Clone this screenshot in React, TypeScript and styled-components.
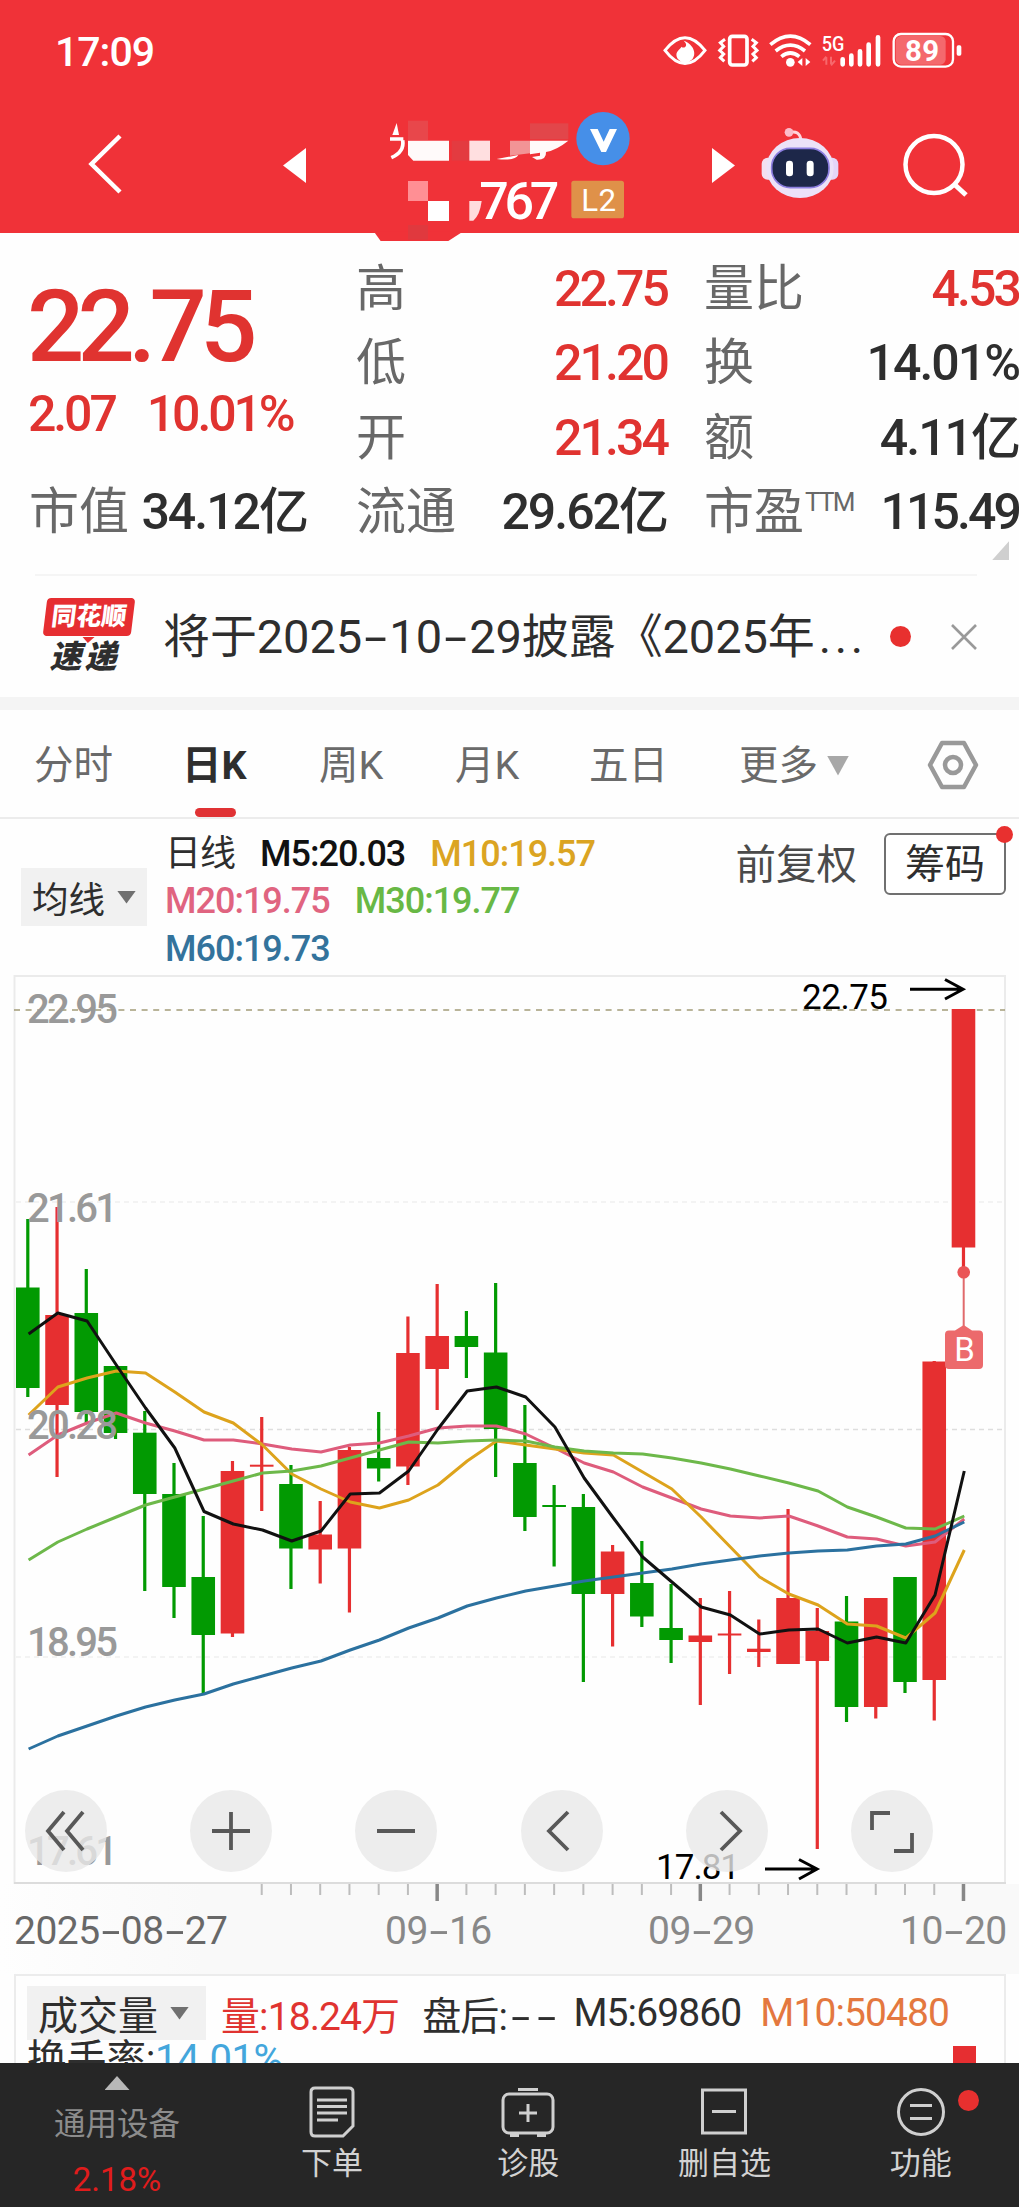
import React from "react";
import styled, { createGlobalStyle } from "styled-components";

const RED = "#e03330";
const INK = "#2e2e2e";
const FONT = 'Roboto, "Noto Sans CJK SC", sans-serif';

const GlobalStyle = createGlobalStyle`
  * { box-sizing: border-box; }
  body { margin: 0; background: #fff; font-family: ${FONT}; }
  svg { display: block; flex: none; }
  svg text { font-family: ${FONT}; }
`;

const Screen = styled.div`
  width: 1019px;
  height: 2207px;
  overflow: hidden;
  display: flex;
  flex-direction: column;
  background: #fefefe;
  color: ${INK};
  white-space: nowrap;
`;

/* ---------- header ---------- */

const Header = styled.header`
  position: relative;
  z-index: 1;
  flex: none;
  height: 233px;
  background: #f03238;
  color: #fff;
`;

const StatusBar = styled.div`
  height: 105px;
  padding: 0 56px 0 55px;
  display: flex;
  justify-content: space-between;
  align-items: flex-start;
`;

const Clock = styled.div`
  padding-top: 27px;
  font-size: 41px;
  font-weight: 500;
  line-height: 50px;
  letter-spacing: -1px;
`;

const StatusIcons = styled.svg`
  margin-top: 31px;
`;

const TitleBar = styled.div`
  height: 128px;
  display: flex;
  align-items: flex-start;
`;

const NavSlot = styled.div<{ $left: number; $top: number }>`
  flex: none;
  margin-left: ${(p) => p.$left}px;
  padding-top: ${(p) => p.$top}px;
`;

/* ---------- quote ---------- */

const Quote = styled.section`
  flex: none;
  height: 341px;
  padding: 19px 0 0 29px;
  display: grid;
  grid-template-columns: 278px 311px 1fr;
  grid-template-rows: repeat(4, 74.3px) 20px;
  column-gap: 49px;
`;

const PriceBlock = styled.div`
  grid-row: 1 / 4;
  color: ${RED};
  padding-top: 15px;
`;

const Price = styled.div`
  font-size: 101px;
  font-weight: 500;
  line-height: 120px;
  letter-spacing: -6.8px;
  margin-left: -2px;
`;

const Change = styled.div`
  display: flex;
  gap: 32px;
  margin-left: -1px;
  font-size: 50px;
  font-weight: 500;
  line-height: 54px;
  letter-spacing: -3.1px;
`;

const Stat = styled.div<{ $shift?: boolean }>`
  display: flex;
  justify-content: space-between;
  align-items: center;
  margin-left: ${(p) => (p.$shift ? -12 : 0)}px;
  line-height: 74px;
`;

const StatLabel = styled.span`
  font-size: 50px;
  color: #686868;
`;

const Sup = styled.sup`
  font-size: 26px;
  line-height: 0;
  letter-spacing: -1.8px;
  vertical-align: 18px;
  margin-left: 1px;
`;

const StatValue = styled.span<{ $up?: boolean; $tight?: boolean }>`
  font-size: 50px;
  font-weight: 500;
  letter-spacing: ${(p) => (p.$tight ? -2.9 : -2)}px;
  color: ${(p) => (p.$up ? RED : INK)};
`;

const Corner = styled.div`
  grid-column: 3;
  justify-self: end;
  align-self: end;
  width: 17px;
  height: 19px;
  margin: 0 10px 9px 0;
  background: #cfcfcf;
  clip-path: polygon(100% 0, 100% 100%, 0 100%);
`;

/* ---------- notice ---------- */

const Notice = styled.section`
  flex: none;
  height: 123px;
  margin: 0 42px 0 35px;
  border-top: 2px solid #f5f5f5;
  display: flex;
  align-items: center;
`;

const Brand = styled.div`
  width: 93px;
  height: 80px;
  margin: 2px 28px 0 7px;
  display: flex;
  flex-direction: column;
  align-items: center;
  font-weight: 900;
  font-style: italic;
`;

const BrandTop = styled.div`
  position: relative;
  width: 88px;
  height: 40px;
  border-radius: 4px;
  transform: skewX(-7deg);
  background: #e62e31;
  color: #fff;
  font-size: 25px;
  line-height: 38px;
  text-align: center;
  font-style: normal;
  &::after {
    content: "";
    position: absolute;
    left: 40px;
    top: 39px;
    border: 6px solid transparent;
    border-top-color: #e62e31;
    border-bottom: 0;
  }
`;

const BrandBottom = styled.div`
  font-size: 32px;
  line-height: 42px;
  letter-spacing: 3px;
  margin-left: -8px;
`;

const NoticeText = styled.div`
  width: 705px;
  font-size: 47px;
  line-height: 60px;
  letter-spacing: -0.1px;
`;

const Ellipsis = styled.span`
  margin-left: 4px;
  letter-spacing: 3.6px;
`;

const DashGlyph = styled.span<{ $w: number }>`
  display: inline-block;
  width: ${(p) => p.$w}em;
  text-align: center;
  transform: scaleX(1.75);
`;

const Dot = styled.span<{ $size: number }>`
  flex: none;
  width: ${(p) => p.$size}px;
  height: ${(p) => p.$size}px;
  border-radius: 50%;
  background: #e8302f;
`;

const NoticeDot = styled(Dot)`
  margin-left: 22px;
`;

const NoticeClose = styled.svg`
  margin-left: auto;
`;

const Divider = styled.div`
  flex: none;
  height: 13px;
  background: #f4f4f4;
`;

/* ---------- tabs ---------- */

const Tabs = styled.nav`
  flex: none;
  height: 109px;
  padding: 0 40px 0 34px;
  border-bottom: 2px solid #ececec;
  display: flex;
  align-items: stretch;
`;

const Tab = styled.div<{ $active?: boolean; $w: number }>`
  width: ${(p) => p.$w}px;
  flex: none;
  display: flex;
  flex-direction: column;
  align-items: flex-start;
  font-size: 39.5px;
  line-height: 111px;
  color: ${(p) => (p.$active ? INK : "#6a6a6a")};
  font-weight: ${(p) => (p.$active ? 700 : 400)};
`;

const TabMark = styled.span`
  width: 41px;
  height: 11px;
  margin: -13px 0 0 13px;
  border-radius: 6px;
  background: #e03234;
`;

const TabLabel = styled.span`
  display: flex;
  align-items: center;
  gap: 9px;
`;

const Caret = styled.span<{ $w: number; $h: number; $c: string; $up?: boolean }>`
  flex: none;
  width: ${(p) => p.$w}px;
  height: ${(p) => p.$h}px;
  background: ${(p) => p.$c};
  clip-path: ${(p) =>
    p.$up ? "polygon(50% 0, 100% 100%, 0 100%)" : "polygon(0 0, 100% 0, 50% 100%)"};
`;

const TabSettings = styled.svg`
  margin: 30px 0 0 auto;
`;

/* ---------- indicator legend ---------- */

const Legend = styled.section`
  flex: none;
  height: 156px;
  padding: 12px 13px 0 21px;
  display: flex;
  align-items: flex-start;
`;

const Picker = styled.button<{ $w: number; $h: number; $size: number }>`
  flex: none;
  width: ${(p) => p.$w}px;
  height: ${(p) => p.$h}px;
  padding: 0 0 0 11px;
  border: 0;
  background: #f1f1f1;
  display: flex;
  align-items: center;
  gap: 12px;
  font-family: inherit;
  font-size: ${(p) => p.$size}px;
  color: ${INK};
`;

const PickerSlot = styled.div`
  padding: 37px 18px 0 0;
`;

const Averages = styled.div`
  width: 480px;
  display: flex;
  flex-wrap: wrap;
  column-gap: 25px;
  font-size: 36px;
  line-height: 47.4px;
  letter-spacing: -1px;
`;

const Average = styled.span<{ $c: string; $regular?: boolean }>`
  color: ${(p) => p.$c};
  font-weight: ${(p) => (p.$regular ? 400 : 500)};
`;

const Adjust = styled.div`
  margin: 11px 0 0 auto;
  font-size: 40.5px;
  line-height: 46px;
  color: #4a4a4a;
`;

const Chips = styled.button`
  position: relative;
  width: 122px;
  height: 62px;
  margin: 2px 0 0 27px;
  padding: 0;
  border: 2px solid #707070;
  border-radius: 6px;
  background: #fff;
  font: 40px/60px ${FONT};
  color: ${INK};
`;

const ChipsDot = styled(Dot)`
  position: absolute;
  right: -9px;
  top: -9px;
`;

/* ---------- chart ---------- */

const ChartArea = styled.section`
  position: relative;
  flex: none;
  height: 909px;
`;

const Controls = styled.div`
  position: absolute;
  left: 25px;
  top: 815px;
  width: 908px;
  display: flex;
  justify-content: space-between;
`;

const Control = styled.button`
  width: 82px;
  height: 82px;
  padding: 0;
  border: 0;
  border-radius: 50%;
  background: rgba(233, 233, 233, 0.8);
`;

const TimeAxis = styled.section`
  flex: none;
  height: 90px;
  background: linear-gradient(90deg, #fefefe, #f9f9f9 20%);
`;

const Dates = styled.div`
  display: grid;
  grid-template-columns: 371px 263px 252px auto;
  padding: 3px 0 0 14px;
  font-size: 39px;
  line-height: 50px;
  letter-spacing: -0.5px;
`;

const DateLabel = styled.span<{ $strong?: boolean }>`
  color: ${(p) => (p.$strong ? "#686868" : "#888")};
`;

/* ---------- volume ---------- */

const Volume = styled.section`
  flex: none;
  height: 89px;
  margin: 0 13px 0 14px;
  border: 2px solid #ececec;
  border-bottom: 0;
  overflow: hidden;
`;

const VolumeRow = styled.div`
  display: flex;
  align-items: center;
  padding: 10px 0 0 11px;
  height: 64px;
  font-size: 39px;
`;

const VolumeItem = styled.span<{ $c: string; $left: number }>`
  color: ${(p) => p.$c};
  margin-left: ${(p) => p.$left}px;
  letter-spacing: -0.9px;
`;

const TurnoverRow = styled.div`
  display: flex;
  justify-content: space-between;
  padding: 0 28px 0 11px;
  font-size: 40px;
  line-height: 40px;
  letter-spacing: -0.4px;
`;

const Turnover = styled.span`
  color: #43a6dc;
`;

const VolumeBar = styled.span`
  width: 23px;
  height: 60px;
  margin-top: 6px;
  background: #e62e31;
`;

/* ---------- bottom navigation ---------- */

const BottomNav = styled.nav`
  flex: none;
  height: 144px;
  background: #262626;
  display: grid;
  grid-template-columns: 234px repeat(4, 196.2px);
`;

const Device = styled.div`
  display: flex;
  flex-direction: column;
  align-items: center;
  padding-top: 13px;
  color: #8c8c8c;
  font-size: 31.5px;
  line-height: 44px;
`;

const DeviceName = styled.span`
  margin-top: 13px;
`;

const DeviceRate = styled.span`
  margin-top: 11px;
  font-size: 33px;
  color: #e01c1c;
`;

const NavItem = styled.div`
  position: relative;
  display: flex;
  flex-direction: column;
  align-items: center;
  padding-top: 22px;
  color: #d2d2d2;
  font-size: 31px;
  line-height: 44px;
`;

const NavIcon = styled.svg`
  margin-bottom: 3px;
`;

const NavDot = styled(Dot)`
  position: absolute;
  left: 135px;
  top: 27px;
`;

function Dash({ w = 0.55 }: { w?: number }) {
  return <DashGlyph $w={w}>-</DashGlyph>;
}

function Dashed({ text, w }: { text: string; w?: number }) {
  return (
    <>
      {text.split("-").map((part, i) => (
        <React.Fragment key={i}>
          {i > 0 && <Dash w={w} />}
          {part}
        </React.Fragment>
      ))}
    </>
  );
}

/* ---------- chart data: vertical positions on the price canvas ---------- */

type Candle = ["u" | "d", number, number, number, number];

// direction, high, body top, body bottom, low
const candles: Candle[] = [
  ["d", 1219, 1287.5, 1388, 1397],
  ["u", 1207, 1315, 1405, 1477],
  ["d", 1269, 1313, 1412, 1423],
  ["d", 1366, 1366, 1433, 1439],
  ["d", 1411, 1432.7, 1494, 1591],
  ["d", 1463, 1494, 1587, 1618],
  ["d", 1516, 1577, 1635, 1693],
  ["u", 1461, 1471, 1633.5, 1637],
  ["u", 1417, 1464.7, 1466.7, 1511],
  ["d", 1465, 1484, 1548.5, 1589],
  ["u", 1501, 1534.5, 1549.5, 1583.5],
  ["u", 1447, 1450, 1548.5, 1612.5],
  ["d", 1412, 1458, 1468.5, 1481.5],
  ["u", 1316.5, 1353, 1466.5, 1485],
  ["u", 1284, 1336, 1369, 1410],
  ["d", 1311, 1336, 1347, 1378],
  ["d", 1283, 1352.5, 1429, 1477],
  ["d", 1405, 1463, 1517, 1531],
  ["d", 1485, 1505, 1507, 1566.5],
  ["d", 1494, 1507, 1594, 1682],
  ["u", 1545, 1551.5, 1594, 1646.5],
  ["d", 1541, 1583, 1616.5, 1627],
  ["d", 1584, 1628, 1640, 1663],
  ["u", 1598, 1635.5, 1642, 1705],
  ["u", 1591, 1633.5, 1635.5, 1674],
  ["u", 1619.5, 1648.7, 1652, 1667],
  ["u", 1509, 1598, 1664, 1664],
  ["u", 1608, 1631, 1661, 1849],
  ["d", 1596, 1621.5, 1707, 1722],
  ["u", 1598, 1598, 1707, 1718.5],
  ["d", 1577, 1577, 1682, 1693],
  ["u", 1361, 1361.5, 1680, 1720.5],
  ["u", 1009, 1009, 1247.5, 1272],
];

const averages: { color: string; ys: number[] }[] = [
  {
    color: "#de5c7c",
    ys: [1455, 1435, 1423, 1413, 1423, 1431, 1440, 1440, 1444, 1449, 1452, 1445, 1443, 1436, 1428, 1426, 1426, 1434, 1448, 1463, 1472, 1487, 1498, 1509, 1516, 1518, 1516, 1526, 1537, 1539, 1546, 1542, 1519],
  },
  {
    color: "#dda31c",
    ys: [1415, 1387, 1378, 1371, 1373, 1392, 1412, 1423, 1445, 1474, 1489, 1502, 1508, 1500, 1485, 1461, 1441, 1445, 1449, 1453, 1455, 1472, 1489, 1517, 1547, 1577, 1594, 1605, 1624, 1626, 1638, 1613, 1550],
  },
  {
    color: "#6db84a",
    ys: [1560, 1542, 1529, 1517, 1505, 1497, 1489, 1481, 1473, 1471, 1466, 1458, 1450, 1442, 1443, 1441, 1440, 1441, 1447, 1451, 1453, 1454, 1458, 1463, 1469, 1476, 1483, 1491, 1507, 1517, 1528, 1529, 1516],
  },
  {
    color: "#2b719f",
    ys: [1749, 1736, 1726, 1716, 1707, 1700, 1694, 1684, 1676, 1668, 1661, 1650, 1640, 1628, 1618, 1606, 1598, 1591, 1586, 1581, 1577, 1573, 1569, 1564, 1560, 1556, 1553, 1551, 1550, 1546, 1544, 1536, 1522],
  },
  {
    color: "#111",
    ys: [1334, 1313, 1321, 1365, 1408, 1448, 1511.5, 1524, 1530, 1541, 1531, 1494, 1493, 1471, 1429, 1391, 1387, 1397, 1427, 1478, 1518, 1557, 1582, 1607, 1615, 1634, 1630, 1629, 1643, 1637, 1643, 1595, 1471],
  },
];

const priceLabels: [string, number][] = [
  ["22.95", 1022.5],
  ["21.61", 1221.5],
  ["20.28", 1439],
  ["18.95", 1656],
  ["17.61", 1865],
];

const centre = (i: number) => 27.8 + i * 29.24;

function PriceChart() {
  return (
    <svg width="1019" height="909" viewBox="0 975 1019 909">
      <path d="M14.5 1884V976H1005V1884" fill="none" stroke="#ebebeb" strokeWidth="2" />
      <path d="M14 1883H1006" stroke="#dcdcdc" strokeWidth="2" />
      <path d="M14 1010H1005" stroke="#a29c78" strokeWidth="1.6" strokeDasharray="6 5.6" />
      <path d="M16 1202H1005M16 1657H1005" stroke="#efefef" strokeWidth="1.4" strokeDasharray="5 4" />
      <path d="M16 1429.5H1005" stroke="#dedede" strokeWidth="1.4" strokeDasharray="5 4" />
      {candles.map(([dir, high, top, bottom, low], i) => {
        const fill = dir === "u" ? "#e62f30" : "#029a02";
        return (
          <g key={i} fill={fill}>
            <rect x={centre(i) - 1.6} y={high} width="3.2" height={low - high} />
            <rect x={centre(i) - 11.8} y={top} width="23.6" height={bottom - top} />
          </g>
        );
      })}
      {averages.map(({ color, ys }) => (
        <polyline
          key={color}
          fill="none"
          stroke={color}
          strokeWidth="3"
          strokeLinejoin="round"
          points={ys.map((y, i) => `${centre(i) + 0.8},${y}`).join(" ")}
        />
      ))}
      {priceLabels.map(([label, y]) => (
        <text key={label} x="27" y={y} fontSize="40" fontWeight="500" fill="#999" textLength="91">
          {label}
        </text>
      ))}
      <g stroke="#000" strokeWidth="3" fill="none">
        <path d="M910 989.3H963M945 979.5L963 989.3L945 999" />
        <path d="M765 1869H817M799 1859.5L817 1869L799 1879" />
      </g>
      <text x="802" y="1009" fontSize="35" textLength="86">22.75</text>
      <text x="656" y="1879" fontSize="35" textLength="84">17.81</text>
      <path d="M963.7 1272V1328" stroke="#e06a6c" strokeWidth="2" />
      <circle cx="963.7" cy="1272.3" r="6.3" fill="#ea5557" />
      <path d="M949 1330.500H955L963.700 1325L972 1330.500H979Q983 1330.500 983 1334.500V1365Q983 1369 979 1369H949Q945 1369 945 1365V1334.500Q945 1330.500 949 1330.500Z" fill="#ec6a6c" />
      <text x="964.500" y="1361" fontSize="33" textAnchor="middle" fill="#fff">B</text>
    </svg>
  );
}

const controlPaths = [
  "M39 22L23 41L39 60M58 22L42 41L58 60",
  "M22 41H60M41 22V60",
  "M22 41H60",
  "M47 22L28 41L47 60",
  "M35 22L54 41L35 60",
  "M39 23H21V40M43 61H61V43",
];

function StatusGlyphs() {
  return (
    <StatusIcons width="300" height="40" viewBox="38 33 900 120">
      <g fill="none" stroke="#fff" strokeWidth="9">
        <path d="M44 91Q104 15 164 91Q104 170 44 91Z" />
        <rect x="238" y="49" width="52" height="86" rx="8" strokeWidth="11" />
        <path d="M224 58L210 68L220 79L208 91L220 102L210 113L222 124M304 58L318 68L308 79L320 91L308 102L318 113L306 124" strokeWidth="9" />
        <path d="M360 74Q420 23 480 74M376 93Q420 58 464 93M393 110Q420 88 447 110" strokeWidth="11" />
        <rect x="730" y="42" width="178" height="98" rx="22" strokeWidth="7" />
      </g>
      <path d="M100 62C118 78 98 88 94 80C84 92 72 98 82 116Q104 140 126 118C142 96 124 70 100 62Z" fill="#fff" />
      <circle cx="420" cy="127" r="13" fill="#fff" />
      <path d="M456 114V138L442 126ZM466 114V138L480 126Z" fill="#fff" />
      <path d="M528 112V134M518 122L528 110M542 110V132M554 122L542 136" stroke="#f7686c" strokeWidth="6" fill="none" />
      <path d="M577 118V133M603 107V133M629 94V133M655 74V133M683 52V133" stroke="#fff" strokeWidth="14" strokeLinecap="round" />
      <rect x="736" y="48" width="150" height="86" rx="16" fill="#f4696d" />
      <rect x="919" y="76" width="14" height="31" rx="5" fill="#fff" />
      <text x="514" y="92" fontSize="62" fontWeight="500" fill="#fff" textLength="68" lengthAdjust="spacingAndGlyphs">5G</text>
      <text x="764" y="123" fontSize="88" fontWeight="700" fill="#fff" textLength="102">89</text>
    </StatusIcons>
  );
}

function StockTitle() {
  return (
    <svg width="300" height="145" viewBox="0 0 900 435">
      <path d="M42 380H308L265 408H62Z" fill="#f03238" />
      <rect x="144" y="47" width="60" height="58" fill="#e8474b" />
      <rect x="510" y="55" width="115" height="48" fill="#e2464a" />
      <rect x="275" y="107" width="52" height="60" fill="#e33b40" />
      <rect x="144" y="360" width="60" height="44" fill="#e0393e" />
      <path d="M110 54L97 90H117Z" fill="#fff" />
      <path d="M90 102H130M128 106Q134 140 94 158" fill="none" stroke="#fff" strokeWidth="11" />
      <path d="M144 107H267V167H160L144 150Z" fill="#fffafa" />
      <rect x="328" y="107" width="62" height="60" fill="#ffdfe0" />
      <path d="M450 107H510V145L450 152Z" fill="#f29496" />
      <path d="M510 107H625Q590 135 558 141Q560 165 530 164L516 156L540 152V143L510 148Z" fill="#fffafa" />
      <path d="M410 162L475 150Q465 168 410 162Z" fill="#fff" />
      <rect x="144" y="228" width="60" height="60" fill="#ff8f94" />
      <rect x="204" y="288" width="63" height="60" fill="#fff" />
      <path d="M328 288H365Q360 330 340 347H328Z" fill="#ffdcdd" />
      <circle cx="729" cy="101" r="80" fill="#468fe8" />
      <path d="M690 72H713L731 110L749 72H771L738 141H724Z" fill="#fff" />
      <rect x="634" y="227" width="158" height="113" rx="8" fill="#df9149" />
      <text x="358" y="342" fontSize="156" fontWeight="500" fill="#fff" textLength="240">767</text>
      <text x="664" y="317" fontSize="94" fill="#fff" textLength="104">L2</text>
    </svg>
  );
}

function Robot() {
  return (
    <svg width="78" height="72" viewBox="332 320 234 216">
      <path d="M416 337Q448 328 452 360" fill="none" stroke="#ffd5dc" strokeWidth="9" />
      <circle cx="416" cy="336" r="13" fill="#fcbcca" />
      <rect x="334" y="412" width="40" height="66" rx="18" fill="#f3dff0" />
      <rect x="524" y="412" width="40" height="66" rx="18" fill="#e4d6f8" />
      <ellipse cx="449" cy="443" rx="101" ry="90" fill="#ece2f8" />
      <rect x="364" y="384" width="172" height="118" rx="56" fill="#1d2749" stroke="#8c7ee0" strokeWidth="5" />
      <rect x="407" y="421" width="21" height="47" rx="10" fill="#fff" />
      <rect x="469" y="421" width="21" height="47" rx="10" fill="#fff" />
    </svg>
  );
}

export default function App() {
  return (
    <>
      <GlobalStyle />
      <Screen>
        <Header>
          <StatusBar>
            <Clock>17:09</Clock>
            <StatusGlyphs />
          </StatusBar>
          <TitleBar>
            <NavSlot $left={87} $top={28}>
              <svg width="37" height="62" viewBox="0 0 37 62">
                <path d="M33 3L4.500 31L33 59" fill="none" stroke="#fff" strokeWidth="4.500" />
              </svg>
            </NavSlot>
            <NavSlot $left={159} $top={43}>
              <svg width="24" height="35" viewBox="0 0 24 35">
                <path d="M23 0V35L0 17.500Z" fill="#fff" />
              </svg>
            </NavSlot>
            <NavSlot $left={53} $top={0}>
              <StockTitle />
            </NavSlot>
            <NavSlot $left={52} $top={43}>
              <svg width="24" height="35" viewBox="0 0 24 35">
                <path d="M0 0V35L23 17.500Z" fill="#fff" />
              </svg>
            </NavSlot>
            <NavSlot $left={25} $top={22}>
              <Robot />
            </NavSlot>
            <NavSlot $left={63} $top={27}>
              <svg width="68" height="68" viewBox="0 0 68 68">
                <circle cx="32" cy="32.500" r="28.500" fill="none" stroke="#fff" strokeWidth="4.500" />
                <path d="M52 52L64 63" stroke="#fff" strokeWidth="5" />
              </svg>
            </NavSlot>
          </TitleBar>
        </Header>

        <Quote>
          <PriceBlock>
            <Price>22.75</Price>
            <Change>
              <span>2.07</span>
              <span>10.01%</span>
            </Change>
          </PriceBlock>
          <Stat><StatLabel>高</StatLabel><StatValue $up $tight>22.75</StatValue></Stat>
          <Stat $shift><StatLabel>量比</StatLabel><StatValue $up $tight>4.53</StatValue></Stat>
          <Stat><StatLabel>低</StatLabel><StatValue $up $tight>21.20</StatValue></Stat>
          <Stat $shift><StatLabel>换</StatLabel><StatValue>14.01%</StatValue></Stat>
          <Stat><StatLabel>开</StatLabel><StatValue $up $tight>21.34</StatValue></Stat>
          <Stat $shift><StatLabel>额</StatLabel><StatValue>4.11亿</StatValue></Stat>
          <Stat><StatLabel>市值</StatLabel><StatValue>34.12亿</StatValue></Stat>
          <Stat><StatLabel>流通</StatLabel><StatValue>29.62亿</StatValue></Stat>
          <Stat $shift>
            <StatLabel>市盈<Sup>TTM</Sup></StatLabel>
            <StatValue $tight>115.49</StatValue>
          </Stat>
          <Corner />
        </Quote>

        <Notice>
          <Brand>
            <BrandTop>同花顺</BrandTop>
            <BrandBottom>速递</BrandBottom>
          </Brand>
          <NoticeText>
            <Dashed text="将于2025-10-29披露《2025年" w={0.58} />
            <Ellipsis>...</Ellipsis>
          </NoticeText>
          <NoticeDot $size={21} />
          <NoticeClose width="26" height="26" viewBox="0 0 26 26">
            <path d="M1 1L25 25M25 1L1 25" stroke="#999" strokeWidth="2.600" />
          </NoticeClose>
        </Notice>
        <Divider />

        <Tabs>
          <Tab $w={148}>分时</Tab>
          <Tab $w={137} $active>
            日K
            <TabMark />
          </Tab>
          <Tab $w={136}>周K</Tab>
          <Tab $w={134}>月K</Tab>
          <Tab $w={150}>五日</Tab>
          <Tab $w={110}>
            <TabLabel>
              更多
              <Caret $w={22} $h={20} $c="#a8a8a8" />
            </TabLabel>
          </Tab>
          <TabSettings width="52" height="50" viewBox="0 0 52 50">
            <path d="M15 3H37L49 25L37 47H15L3 25Z" fill="none" stroke="#999" strokeWidth="4.500" strokeLinejoin="round" />
            <circle cx="26" cy="25" r="8" fill="none" stroke="#999" strokeWidth="4.500" />
          </TabSettings>
        </Tabs>

        <Legend>
          <PickerSlot>
            <Picker $w={126} $h={58} $size={36.5}>
              均线
              <Caret $w={19} $h={13} $c="#707070" />
            </Picker>
          </PickerSlot>
          <Averages>
            <Average $c={INK} $regular>日线</Average>
            <Average $c="#111">M5:20.03</Average>
            <Average $c="#dba422">M10:19.57</Average>
            <Average $c="#e06480">M20:19.75</Average>
            <Average $c="#68b845">M30:19.77</Average>
            <Average $c="#33739c">M60:19.73</Average>
          </Averages>
          <Adjust>前复权</Adjust>
          <Chips>
            筹码
            <ChipsDot $size={17} />
          </Chips>
        </Legend>

        <ChartArea>
          <PriceChart />
          <Controls>
            {controlPaths.map((d) => (
              <Control key={d}>
                <svg width="82" height="82" viewBox="0 0 82 82">
                  <path d={d} fill="none" stroke="#585858" strokeWidth="3.800" />
                </svg>
              </Control>
            ))}
          </Controls>
        </ChartArea>

        <TimeAxis>
          <svg width="1019" height="19" viewBox="0 0 1019 19">
            {Array.from({ length: 25 }, (_, k) => k + 8).map((i) => {
              const major = i % 9 === 5;
              return (
                <path
                  key={i}
                  d={`M${centre(i)} 0V${major ? 17 : 11}`}
                  stroke={major ? "#888" : "#bdbdbd"}
                  strokeWidth={major ? 3.5 : 2}
                />
              );
            })}
          </svg>
          <Dates>
            <DateLabel $strong><Dashed text="2025-08-27" w={0.54} /></DateLabel>
            <DateLabel><Dashed text="09-16" w={0.54} /></DateLabel>
            <DateLabel><Dashed text="09-29" w={0.54} /></DateLabel>
            <DateLabel><Dashed text="10-20" w={0.54} /></DateLabel>
          </Dates>
        </TimeAxis>

        <Volume>
          <VolumeRow>
            <Picker $w={179} $h={54} $size={40}>
              成交量
              <Caret $w={19} $h={13} $c="#707070" />
            </Picker>
            <VolumeItem $c={RED} $left={15}>量:18.24万</VolumeItem>
            <VolumeItem $c={INK} $left={23}>盘后:<Dash w={0.66} /><Dash w={0.66} /></VolumeItem>
            <VolumeItem $c={INK} $left={15}>M5:69860</VolumeItem>
            <VolumeItem $c="#e4783f" $left={19}>M10:50480</VolumeItem>
          </VolumeRow>
          <TurnoverRow>
            <span>换手率:<Turnover>14.01%</Turnover></span>
            <VolumeBar />
          </TurnoverRow>
        </Volume>

        <BottomNav>
          <Device>
            <Caret $w={25} $h={14} $c="#b8b8b8" $up />
            <DeviceName>通用设备</DeviceName>
            <DeviceRate>2.18%</DeviceRate>
          </Device>
          <NavItem>
            <NavIcon width="56" height="54" viewBox="0 0 56 54" fill="none" stroke="#cfcfcf" strokeWidth="3">
              <path d="M11 3H45Q49 3 49 7V41L39 51H11Q7 51 7 47V7Q7 3 11 3ZM13 15H43M13 21.500H43M13 28H43M13 35H34" />
            </NavIcon>
            下单
          </NavItem>
          <NavItem>
            <NavIcon width="56" height="54" viewBox="0 0 56 54" fill="none" stroke="#cfcfcf" strokeWidth="3">
              <rect x="3" y="9" width="50" height="39" rx="6" />
              <path d="M18 4.500H38M28 19V37M19 28H37M10 50.500H19M37 50.500H46" />
            </NavIcon>
            诊股
          </NavItem>
          <NavItem>
            <NavIcon width="56" height="54" viewBox="0 0 56 54" fill="none" stroke="#cfcfcf" strokeWidth="3">
              <path d="M6.500 5H49.500V48H6.500ZM16 26.500H40" />
            </NavIcon>
            删自选
          </NavItem>
          <NavItem>
            <NavIcon width="56" height="54" viewBox="0 0 56 54" fill="none" stroke="#cfcfcf" strokeWidth="3">
              <circle cx="28" cy="27" r="22.500" />
              <path d="M17 20.500H39M17 33.500H39" />
            </NavIcon>
            功能
            <NavDot $size={21} />
          </NavItem>
        </BottomNav>
      </Screen>
    </>
  );
}
